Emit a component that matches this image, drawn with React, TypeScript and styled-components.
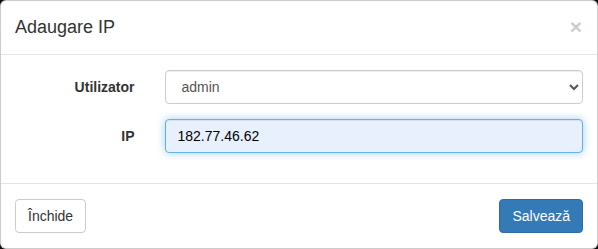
import React from "react";
import styled, { createGlobalStyle } from "styled-components";

const GlobalStyle = createGlobalStyle`
  html, body {
    margin: 0;
    padding: 0;
    background: #0d0d0d;
  }
  body {
    font-family: "Liberation Sans", Arial, Helvetica, sans-serif;
    font-size: 14px;
    line-height: 1.42857143;
    color: #333333;
  }
  * {
    box-sizing: border-box;
  }
`;

const Modal = styled.div`
  width: 598px;
  background: #ffffff;
  border: 1px solid rgba(0, 0, 0, 0.2);
  border-radius: 6px;
  overflow: hidden;
`;

const Header = styled.div`
  display: flex;
  align-items: flex-start;
  justify-content: space-between;
  padding: 14px 15px 15px 14px;
  border-bottom: 1px solid #e5e5e5;
`;

const Title = styled.h4`
  margin: 0;
  font-size: 18px;
  font-weight: 500;
  line-height: 24px;
  color: #333333;
`;

const Close = styled.button`
  margin: 0;
  padding: 0;
  border: 0;
  background: transparent;
  font-family: "Liberation Sans", Arial, sans-serif;
  font-size: 21px;
  font-weight: 700;
  line-height: 1;
  color: #000000;
  opacity: 0.2;
  cursor: pointer;
  margin-top: 1px;
`;

const Body = styled.div`
  display: flex;
  flex-direction: column;
  gap: 15px;
  padding: 15px 14px 30px 14px;
`;

const FormGroup = styled.div`
  display: grid;
  grid-template-columns: 149.5px 1fr;
  margin: 0 -15px;
`;

const Label = styled.label`
  padding: 7px 15px 0 15px;
  text-align: right;
  font-weight: 700;
  color: #333333;
`;

const Field = styled.div`
  padding: 0 15px;
`;

const Select = styled.select`
  display: block;
  width: 100%;
  height: 34px;
  padding: 6px 12px;
  font-family: "Liberation Sans", Arial, sans-serif;
  font-size: 14px;
  color: #555555;
  background: #ffffff;
  border: 1px solid #cccccc;
  border-radius: 4px;
  box-shadow: inset 0 1px 1px rgba(0, 0, 0, 0.075);
  outline: none;
`;

const Input = styled.input`
  display: block;
  width: 100%;
  height: 34px;
  padding: 6px 12px;
  font-family: "Liberation Sans", Arial, sans-serif;
  font-size: 14px;
  color: #000000;
  background: #e8f0fe;
  border: 1px solid #66afe9;
  border-radius: 4px;
  outline: none;
  box-shadow: inset 0 1px 1px rgba(0, 0, 0, 0.075),
    0 0 8px rgba(102, 175, 233, 0.6);
`;

const Footer = styled.div`
  display: flex;
  justify-content: space-between;
  align-items: center;
  padding: 15px 14px 15px 14px;
  border-top: 1px solid #e5e5e5;
`;

const Button = styled.button<{ $primary?: boolean }>`
  display: inline-block;
  height: 34px;
  padding: 6px 12px;
  font-family: "Liberation Sans", Arial, sans-serif;
  font-size: 14px;
  line-height: 1.42857143;
  border-radius: 4px;
  cursor: pointer;
  color: ${(p) => (p.$primary ? "#ffffff" : "#333333")};
  background: ${(p) => (p.$primary ? "#337ab7" : "#ffffff")};
  border: 1px solid ${(p) => (p.$primary ? "#2e6da4" : "#cccccc")};
`;

export default function App() {
  return (
    <>
      <GlobalStyle />
      <Modal>
        <Header>
          <Title>Adaugare IP</Title>
          <Close aria-label="Close">×</Close>
        </Header>
        <Body>
          <FormGroup>
            <Label>Utilizator</Label>
            <Field>
              <Select defaultValue="admin">
                <option value="admin">admin</option>
              </Select>
            </Field>
          </FormGroup>
          <FormGroup>
            <Label>IP</Label>
            <Field>
              <Input defaultValue="182.77.46.62" />
            </Field>
          </FormGroup>
        </Body>
        <Footer>
          <Button>Închide</Button>
          <Button $primary>Salvează</Button>
        </Footer>
      </Modal>
    </>
  );
}
